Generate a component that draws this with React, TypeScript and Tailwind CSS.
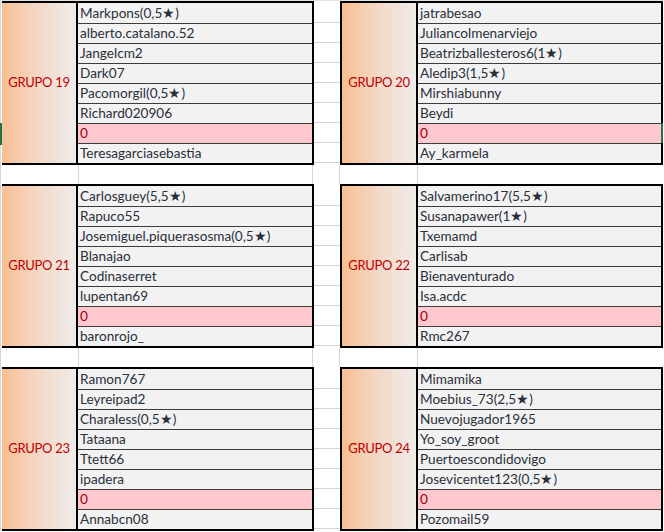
import React from "react";

type Group = { label: string; names: string[] };

const rows: [Group, Group][] = [
  [
    {
      label: "GRUPO 19",
      names: ["Markpons(0,5★)", "alberto.catalano.52", "Jangelcm2", "Dark07", "Pacomorgil(0,5★)", "Richard020906", "0", "Teresagarciasebastia"],
    },
    {
      label: "GRUPO 20",
      names: ["jatrabesao", "Juliancolmenarviejo", "Beatrizballesteros6(1★)", "Aledip3(1,5★)", "Mirshiabunny", "Beydi", "0", "Ay_karmela"],
    },
  ],
  [
    {
      label: "GRUPO 21",
      names: ["Carlosguey(5,5★)", "Rapuco55", "Josemiguel.piquerasosma(0,5★)", "Blanajao", "Codinaserret", "lupentan69", "0", "baronrojo_"],
    },
    {
      label: "GRUPO 22",
      names: ["Salvamerino17(5,5★)", "Susanapawer(1★)", "Txemamd", "Carlisab", "Bienaventurado", "Isa.acdc", "0", "Rmc267"],
    },
  ],
  [
    {
      label: "GRUPO 23",
      names: ["Ramon767", "Leyreipad2", "Charaless(0,5★)", "Tataana", "Ttett66", "ipadera", "0", "Annabcn08"],
    },
    {
      label: "GRUPO 24",
      names: ["Mimamika", "Moebius_73(2,5★)", "Nuevojugador1965", "Yo_soy_groot", "Puertoescondidovigo", "Josevicentet123(0,5★)", "0", "Pozomail59"],
    },
  ],
];

function Names({ names }: { names: string[] }) {
  return (
    <div className="flex-1 flex flex-col">
      {names.map((n, i) => {
        const zero = n === "0";
        return (
          <div
            key={i}
            className={
              "h-[20px] flex items-end pl-[2px] pb-[1px] whitespace-nowrap overflow-hidden text-[13.6px] leading-[18px] " +
              (i > 0 ? "border-t border-[#3c3c3c] " : "") +
              (zero ? "bg-[#ffc7ce] text-[#9c0006]" : "bg-[#f2f2f2] text-[#2a303a]")
            }
          >
            {n}
          </div>
        );
      })}
    </div>
  );
}

function Label({ text }: { text: string }) {
  return (
    <div className="w-[76px] shrink-0 flex items-center justify-center bg-linear-to-r from-[#f8bf92] via-[#f3d9c8] to-[#efecea] border-r-2 border-black text-[13px] tracking-[-0.3px] text-[#c00000]">
      {text}
    </div>
  );
}

function GapColumn() {
  return (
    <div className="w-[26px] shrink-0 flex flex-col pt-[2px]">
      {Array.from({ length: 8 }).map((_, i) => (
        <div key={i} className="h-[20px] border-b border-[#d6d6d6]" />
      ))}
    </div>
  );
}

function GapRow() {
  return (
    <div className="h-[19px] flex">
      <div className="w-[2px] border-l border-[#d6d6d6]" />
      <div className="w-[77px] border-r border-[#d6d6d6]" />
      <div className="w-[234px] border-r border-[#d6d6d6]" />
      <div className="w-[27px] border-r border-[#d6d6d6]" />
      <div className="w-[78px] border-r border-[#d6d6d6]" />
      <div className="flex-1" />
    </div>
  );
}

export default function App() {
  return (
    <div className="w-[664px] h-[532px] bg-white overflow-hidden font-['Lato',sans-serif] relative">
      <div className="h-[1px] border-b border-[#e2e2e2]" />
      {rows.map(([a, b], r) => (
        <React.Fragment key={r}>
          <div className="h-[164px] flex">
            <div className="w-[2px] shrink-0 border-l border-[#d6d6d6] relative">
              {r === 0 && <div className="absolute left-[-1px] top-[122px] w-[2px] h-[22px] bg-[#217346]" />}
            </div>
            <div className="w-[312px] shrink-0 flex border-y-2 border-r-2 border-black">
              <Label text={a.label} />
              <Names names={a.names} />
            </div>
            <GapColumn />
            <div className="w-[323px] shrink-0 flex border-2 border-black relative">
              <Label text={b.label} />
              <Names names={b.names} />
              {r === 0 && <div className="absolute right-[-2px] top-[120px] w-[2px] h-[20px] bg-[#217346]" />}
            </div>
            <div className="flex-1" />
          </div>
          {r < 2 && <GapRow />}
        </React.Fragment>
      ))}
    </div>
  );
}
